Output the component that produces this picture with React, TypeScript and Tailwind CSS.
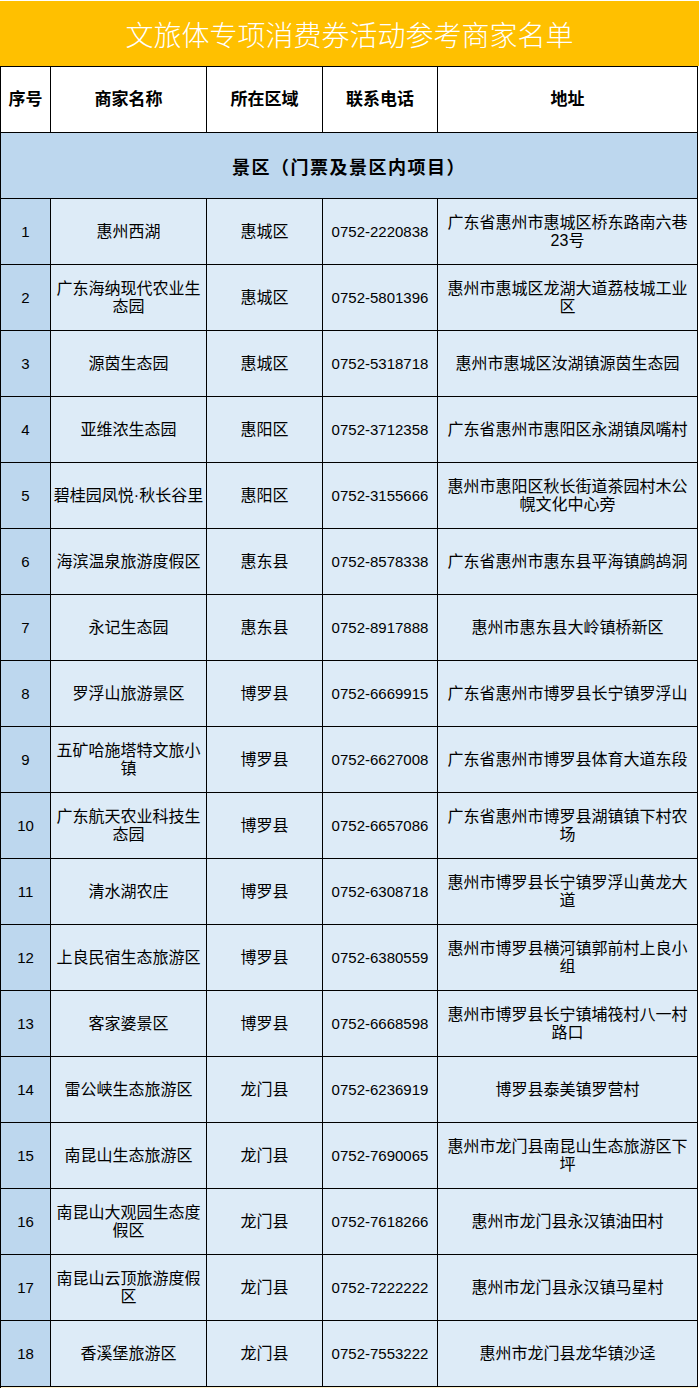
const rows = [
  ["1", "惠州西湖", "惠城区", "0752-2220838", "广东省惠州市惠城区桥东路南六巷23号"],
  ["2", "广东海纳现代农业生态园", "惠城区", "0752-5801396", "惠州市惠城区龙湖大道荔枝城工业区"],
  ["3", "源茵生态园", "惠城区", "0752-5318718", "惠州市惠城区汝湖镇源茵生态园"],
  ["4", "亚维浓生态园", "惠阳区", "0752-3712358", "广东省惠州市惠阳区永湖镇凤嘴村"],
  ["5", "碧桂园凤悦·秋长谷里", "惠阳区", "0752-3155666", "惠州市惠阳区秋长街道茶园村木公幌文化中心旁"],
  ["6", "海滨温泉旅游度假区", "惠东县", "0752-8578338", "广东省惠州市惠东县平海镇鹧鸪洞"],
  ["7", "永记生态园", "惠东县", "0752-8917888", "惠州市惠东县大岭镇桥新区"],
  ["8", "罗浮山旅游景区", "博罗县", "0752-6669915", "广东省惠州市博罗县长宁镇罗浮山"],
  ["9", "五矿哈施塔特文旅小镇", "博罗县", "0752-6627008", "广东省惠州市博罗县体育大道东段"],
  ["10", "广东航天农业科技生态园", "博罗县", "0752-6657086", "广东省惠州市博罗县湖镇镇下村农场"],
  ["11", "清水湖农庄", "博罗县", "0752-6308718", "惠州市博罗县长宁镇罗浮山黄龙大道"],
  ["12", "上良民宿生态旅游区", "博罗县", "0752-6380559", "惠州市博罗县横河镇郭前村上良小组"],
  ["13", "客家婆景区", "博罗县", "0752-6668598", "惠州市博罗县长宁镇埔筏村八一村路口"],
  ["14", "雷公峡生态旅游区", "龙门县", "0752-6236919", "博罗县泰美镇罗营村"],
  ["15", "南昆山生态旅游区", "龙门县", "0752-7690065", "惠州市龙门县南昆山生态旅游区下坪"],
  ["16", "南昆山大观园生态度假区", "龙门县", "0752-7618266", "惠州市龙门县永汉镇油田村"],
  ["17", "南昆山云顶旅游度假区", "龙门县", "0752-7222222", "惠州市龙门县永汉镇马星村"],
  ["18", "香溪堡旅游区", "龙门县", "0752-7553222", "惠州市龙门县龙华镇沙迳"],
];

const cell =
  "h-[66px] border-r border-b border-black flex items-center justify-center text-center px-[3px] leading-[18px]";

function App() {
  return (
    <div className="w-[699px] bg-white text-black font-['Liberation_Sans','Noto_Sans_CJK_SC',sans-serif]">
      <div className="h-[66px] bg-[#FFC000] border-t border-white flex items-center justify-center">
        <div className="text-white text-[28px] font-light font-['Noto_Sans_CJK_SC',sans-serif]">
          文旅体专项消费券活动参考商家名单
        </div>
      </div>
      <div className="w-[698px] border-l border-t border-black grid grid-cols-[50px_156px_116px_115px_260px]">
        {["序号", "商家名称", "所在区域", "联系电话", "地址"].map((h) => (
          <div key={h} className={`${cell} font-bold text-[17px]`}>
            {h}
          </div>
        ))}
        <div className={`${cell} col-span-5 bg-[#BDD7EE]`}>
          <span className="font-bold text-[18px] tracking-[1.5px] font-['Noto_Sans_CJK_SC',sans-serif]">
            景区（门票及景区内项目）
          </span>
        </div>
        {rows.map((r) => (
          <div key={r[0]} className="contents">
            <div className={`${cell} bg-[#BDD7EE] text-[15px]`}>{r[0]}</div>
            <div className={`${cell} !px-0 bg-[#DDEBF7] text-[16px]`}>{r[1]}</div>
            <div className={`${cell} bg-[#DDEBF7] text-[16px]`}>{r[2]}</div>
            <div className={`${cell} bg-[#DDEBF7] text-[15px]`}>{r[3]}</div>
            <div className={`${cell} bg-[#DDEBF7] text-[16px]`}>{r[4]}</div>
          </div>
        ))}
        <div className="h-[66px] col-span-5 bg-[#FFF2CC]" />
      </div>
    </div>
  );
}

export default App;
